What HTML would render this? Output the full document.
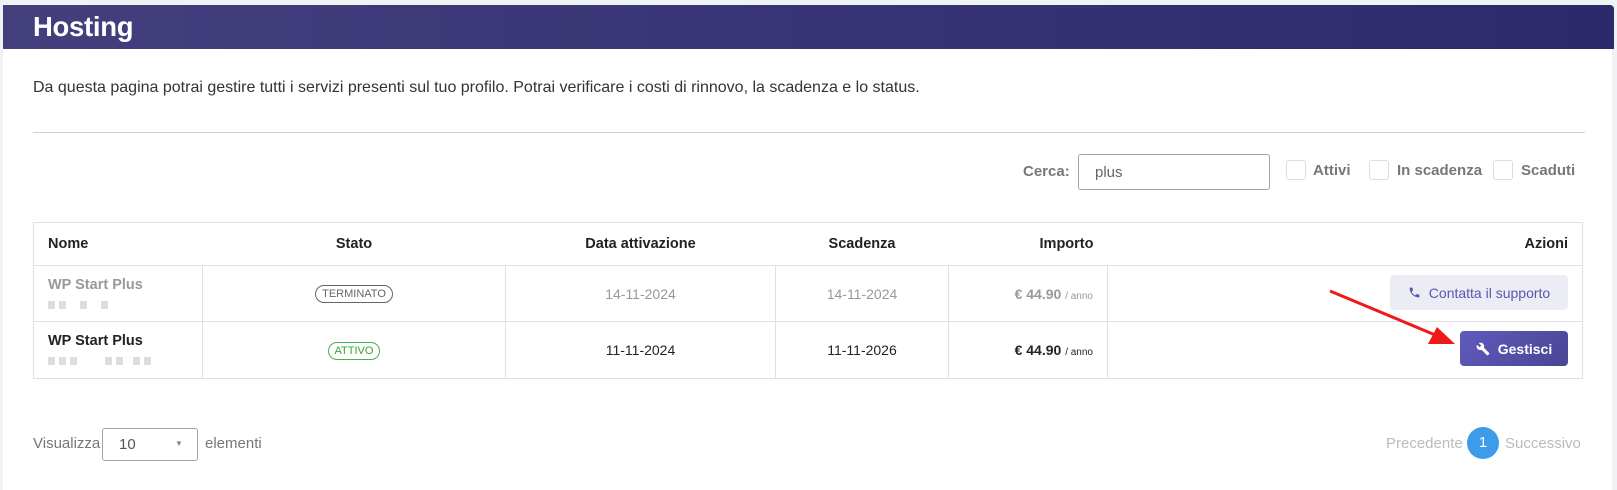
<!DOCTYPE html>
<html><head><meta charset="utf-8"><style>
*{box-sizing:border-box;margin:0;padding:0}
body{width:1617px;height:490px;background:#f0f3f4;font-family:"Liberation Sans",sans-serif;position:relative;overflow:hidden}
.card{position:absolute;left:3px;top:5px;width:1609px;height:485px;background:#fff}
.hdr{position:absolute;left:3px;top:5px;width:1611px;height:44px;background:linear-gradient(90deg,#443f7d,#2c2a6b);border-top-right-radius:4px}
.hdr span{position:absolute;left:30px;top:6px;color:#fff;font-size:27.5px;font-weight:bold;letter-spacing:-0.3px}
.abs{position:absolute;white-space:nowrap}
.desc{left:33px;top:79px;font-size:16px;color:#333}
.hr{left:33px;top:132px;width:1552px;height:1px;background:#d0d0d0}
.lbl{font-size:15px;font-weight:bold;color:#777}
.cb{position:absolute;width:20px;height:20px;border:1px solid #ddd;border-radius:3px;top:160px}
.inp{left:1078px;top:154px;width:192px;height:36px;border:1px solid #9aa6b2;border-radius:3px;font-size:15px;color:#666;padding:9px 0 0 16px}
table{position:absolute;left:33px;top:222px;width:1550px;border-collapse:collapse;border:1px solid #e0e0e3;font-size:14px}
td,th{border-top:1px solid #e0e0e3;padding:0 14px}
th{height:43px;font-weight:bold;color:#222;font-size:14.5px}
td{border-left:1px solid #e0e0e3;border-right:1px solid #e0e0e3}
tr.r1 td{height:56px;color:#999}
tr.r2 td{height:57px;color:#222}
.c{text-align:center}.r{text-align:right}
.nm{font-weight:bold;font-size:14.5px}
.blur{display:flex;gap:0;margin-top:8px;height:10px}
.blur i{display:inline-block;width:7px;height:8px;background:#ddd;margin-right:4px}
.badge{display:inline-block;border:1px solid;border-radius:10px;font-size:11px;padding:2px 6px}
.amt{font-weight:bold;font-size:14px}
.btn{position:absolute;border-radius:4px;font-size:14px;display:flex;align-items:center;justify-content:center;gap:8px}
</style></head><body>
<div class="card"></div>
<div class="hdr"><span>Hosting</span></div>
<div class="abs desc">Da questa pagina potrai gestire tutti i servizi presenti sul tuo profilo. Potrai verificare i costi di rinnovo, la scadenza e lo status.</div>
<div class="abs hr"></div>
<div class="abs lbl" style="left:1023px;top:163px">Cerca:</div>
<div class="abs inp">plus</div>
<div class="cb" style="left:1286px"></div><div class="abs lbl" style="left:1313px;top:162px">Attivi</div>
<div class="cb" style="left:1369px"></div><div class="abs lbl" style="left:1397px;top:162px">In scadenza</div>
<div class="cb" style="left:1493px"></div><div class="abs lbl" style="left:1521px;top:162px">Scaduti</div>
<table>
<tr><th style="text-align:left;width:169px">Nome</th><th class="c" style="width:303px">Stato</th><th class="c" style="width:270px">Data attivazione</th><th class="c" style="width:173px">Scadenza</th><th class="r" style="width:159px">Importo</th><th class="r">Azioni</th></tr>
<tr class="r1"><td style="border-left:none"><div class="nm">WP Start Plus</div><div class="blur"><i></i><i style="margin-right:14px"></i><i style="margin-right:14px"></i><i></i></div></td><td class="c"><span class="badge" style="border-color:#666;color:#666">TERMINATO</span></td><td class="c">14-11-2024</td><td class="c">14-11-2024</td><td class="r"><span class="amt">€ 44.90</span> <small style="font-size:10px">/ anno</small></td><td style="border-right:none"></td></tr>
<tr class="r2"><td style="border-left:none"><div class="nm">WP Start Plus</div><div class="blur"><i></i><i></i><i style="margin-right:28px"></i><i></i><i style="margin-right:10px"></i><i></i><i></i></div></td><td class="c"><span class="badge" style="border-color:#4caf50;color:#3aa23a">ATTIVO</span></td><td class="c">11-11-2024</td><td class="c">11-11-2026</td><td class="r"><span class="amt">€ 44.90</span> <small style="font-size:10px">/ anno</small></td><td style="border-right:none"></td></tr>
</table>
<div class="btn" style="left:1390px;top:275px;width:178px;height:35px;background:#ececf5;color:#5b55b0">
<svg width="13" height="13" viewBox="0 0 24 24"><path fill="#5b55b0" d="M6.6 10.8c1.4 2.8 3.8 5.1 6.6 6.6l2.2-2.2c.3-.3.7-.4 1-.2 1.1.4 2.300.6 3.6.6.6 0 1 .4 1 1V20c0 .6-.4 1-1 1C10.6 21 3 13.4 3 4c0-.6.4-1 1-1h3.5c.6 0 1 .4 1 1 0 1.3.2 2.5.6 3.6.1.3 0 .7-.2 1z"/></svg>Contatta il supporto</div>
<div class="btn" style="left:1460px;top:331px;width:108px;height:35px;background:linear-gradient(135deg,#5f5bbd,#4a4594);color:#fff;font-weight:bold">
<svg width="14" height="14" viewBox="0 0 24 24"><path fill="#fff" d="M22.7 19l-9.1-9.1c.9-2.3.4-5-1.5-6.9-2-2-5-2.4-7.4-1.3L9 6 6 9 1.6 4.7C.4 7.1.9 10.1 2.9 12.1c1.9 1.9 4.6 2.4 6.9 1.5l9.1 9.1c.4.4 1 .4 1.4 0l2.3-2.3c.5-.4.5-1.1.1-1.4z"/></svg>Gestisci</div>
<svg class="abs" style="left:0;top:0" width="1617" height="490"><line x1="1330" y1="291" x2="1440" y2="337" stroke="#f01818" stroke-width="3"/><polygon points="1455,344 1428,344 1437,327" fill="#f01818"/></svg>
<div class="abs" style="left:33px;top:435px;font-size:15px;color:#777">Visualizza</div>
<div class="abs" style="left:102px;top:428px;width:96px;height:33px;border:1px solid #9aa6b2;border-radius:3px;font-size:15px;color:#555;padding:7px 0 0 16px">10<span style="position:absolute;left:72px;top:10px;font-size:8px;color:#888">▼</span></div>
<div class="abs" style="left:205px;top:435px;font-size:15px;color:#777">elementi</div>
<div class="abs" style="left:1386px;top:435px;font-size:15px;color:#bbb">Precedente</div>
<div class="abs" style="left:1467px;top:427px;width:32px;height:32px;border-radius:50%;background:#3d9be9;color:#fff;font-size:15px;text-align:center;line-height:32px">1</div>
<div class="abs" style="left:1505px;top:435px;font-size:15px;color:#bbb">Successivo</div>
</body></html>
